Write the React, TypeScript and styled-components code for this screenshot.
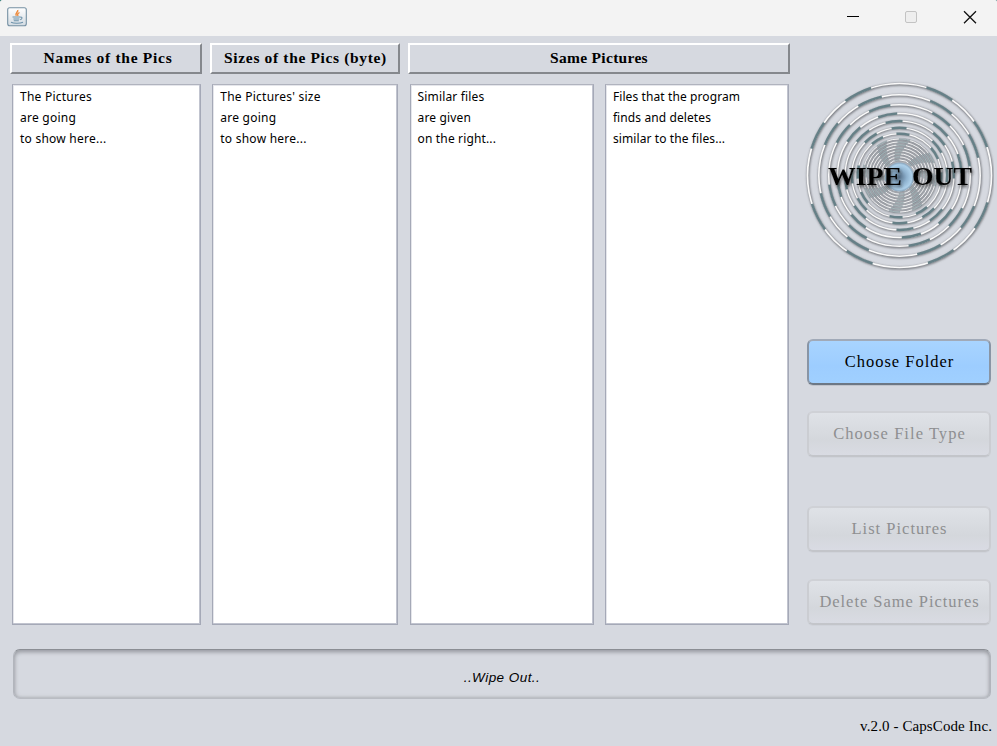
import React from "react";
import styled, { createGlobalStyle } from "styled-components";

const GlobalStyle = createGlobalStyle`
  * { box-sizing: border-box; }
  body { margin: 0; background: #27776f; overflow: hidden; }
`;

const Window = styled.div`
  width: 997px;
  height: 746px;
  display: flex;
  flex-direction: column;
  background: #d6d9e0;
  border-radius: 3px 2px 0 0;
  overflow: hidden;
  color: #000;
`;

const TitleBar = styled.header`
  height: 36px;
  flex: none;
  display: flex;
  align-items: flex-start;
  justify-content: space-between;
  background: #f3f3f3;
  padding: 7px 18px 0 7px;
`;

const WindowControls = styled.div`
  display: flex;
  align-items: center;
  gap: 40px;
  padding-top: 1px;
`;

const Main = styled.main`
  display: flex;
  height: 589px;
  padding: 7px 6px 0 10px;
`;

const Tables = styled.section`
  width: 780px;
  flex: none;
`;

const HeadingRow = styled.div`
  display: grid;
  grid-template-columns: 192px 190px 382px;
  gap: 8px;
  height: 31px;
`;

const Heading = styled.h2<{ $spacing: string; $shift?: string }>`
  margin: 0;
  height: 31px;
  display: flex;
  align-items: center;
  justify-content: center;
  padding: 0 0 1px ${(p) => p.$shift ?? "0"};
  border: 2px solid;
  border-color: #fff #85888d #85888d #fff;
  font: bold 15.5px/20px "Liberation Serif", serif;
  letter-spacing: ${(p) => p.$spacing};
  white-space: nowrap;
`;

const ListRow = styled.div`
  display: grid;
  grid-template-columns: 189px 186px 184px 184px;
  column-gap: 11.3px;
  justify-content: start;
  height: 541px;
  margin: 10px 0 0 2px;
`;

const List = styled.ul`
  list-style: none;
  margin: 0;
  padding: 2px 0 0 7px;
  background: #fff;
  border: 1px solid #a5a9b7;
  border-top-color: #b0b3be;
  box-shadow: inset -1px -1px #c1c4cf, inset 1px 1px #e5e6eb;
`;

const ListItem = styled.li<{ $spacing: string }>`
  height: 21px;
  font: 12px/20px "Noto Sans", sans-serif;
  letter-spacing: ${(p) => p.$spacing};
  white-space: nowrap;
`;

const Sidebar = styled.aside`
  width: 187px;
  margin-left: 15px;
  display: flex;
  flex-direction: column;
  align-items: center;
`;

const LogoArt = styled.svg`
  display: block;
  width: 190px;
  height: 190px;
  margin: 38px 0 68px;
  flex: none;
`;

const ActionButton = styled.button<{ $gap: string; $spacing: string }>`
  width: 184px;
  height: 46px;
  flex: none;
  margin: 0 0 ${(p) => p.$gap};
  padding: 0 0 1px 2px;
  font: 16.5px/22px "Liberation Serif", serif;
  letter-spacing: ${(p) => p.$spacing};
  white-space: nowrap;
  color: #000;
  border: 2px solid;
  border-color: #a1aab8 #8995a5 #6d7885;
  border-radius: 6px;
  background: linear-gradient(#a8d4ff, #9dcdff 60%, #a0d0ff);
  box-shadow: 0 1px #c1c4cb;
  &:disabled {
    color: #8e8f91;
    border-color: #cfd1d6 #cbcdd2 #c3c5ca;
    background: linear-gradient(#dfe2e7, #d4d7dc 65%, #d9dbe3);
    box-shadow: 0 1px #d0d3da;
  }
`;

const StatusBar = styled.div`
  flex: none;
  margin: 24px 6px 0 13px;
  height: 50px;
  display: flex;
  align-items: center;
  justify-content: center;
  padding: 7px 0 0;
  border: 1px solid;
  border-color: #8b8e94 #b2b5bc #b9bcc3;
  border-radius: 7px;
  box-shadow: inset 0 2px 4px #9699a0, inset 0 -1px 2px #bfc2c8, inset 0 0 5px #c0c2c6;
  font: italic 13.5px/16px "Liberation Sans", sans-serif;
  letter-spacing: 0.45px;
`;

const Footer = styled.footer`
  display: flex;
  justify-content: flex-end;
  padding: 17px 5px 0 0;
  font: 15px/20px "Liberation Serif", serif;
  letter-spacing: 0.1px;
`;

const CENTER_X = 95.5;
const CENTER_Y = 94.5;

const point = (r: number, degrees: number) => {
  const a = (degrees * Math.PI) / 180;
  return `${(CENTER_X + r * Math.sin(a)).toFixed(2)} ${(CENTER_Y - r * Math.cos(a)).toFixed(2)}`;
};

const rings = Array.from({ length: 15 }, (_, i) => ({
  radius: i < 7 ? 92 * Math.pow(0.877, i) : 36.6 - (i - 7) * 3,
  turn: i < 7 ? i * 5.3 : 35 - (i - 7) * 2.5,
  stroke: i < 7 ? 2 - i * 0.1 : 1.1,
  tealStroke: i < 7 ? 2.5 : 1.5,
  tealOpacity: i < 7 ? 1 : 0.55,
}));

// Each quadrant carries two teal dashes, 18 degrees long.
const dashes = (radius: number, turn: number) =>
  [0, 90, 180, 270]
    .flatMap((q) => [q + 17, q + 54])
    .map((start) => `M${point(radius, start + turn)}A${radius} ${radius} 0 0 1 ${point(radius, start + turn + 18)}`)
    .join("");

const Logo = () => (
  <LogoArt viewBox="0 0 190 190" role="img" aria-label="Wipe Out">
    <defs>
      <filter id="soften"><feGaussianBlur stdDeviation="0.8" /></filter>
      <filter id="glow" x="-5%" y="-30%" width="110%" height="180%">
        <feDropShadow dx="1" dy="2" stdDeviation="1.5" floodColor="#222" floodOpacity="0.7" />
      </filter>
      <radialGradient id="orb">
        <stop offset="0" stopColor="#57718a" />
        <stop offset="0.5" stopColor="#8fb2cf" />
        <stop offset="0.85" stopColor="#add0ea" />
        <stop offset="1" stopColor="#86a1b8" />
      </radialGradient>
    </defs>
    <circle cx={CENTER_X} cy={CENTER_Y} r="38" fill="#9fa7b0" opacity="0.25" />
    <g fill="none" filter="url(#soften)" stroke="#5f6266">
      {rings.map((r) => (
        <circle key={r.radius} cx={CENTER_X + 0.5} cy={CENTER_Y + 0.8} r={r.radius} strokeWidth={r.stroke * 1.3} opacity="0.85" />
      ))}
    </g>
    {rings.map((r) => (
      <g key={r.radius} fill="none">
        <circle cx={CENTER_X} cy={CENTER_Y} r={r.radius} stroke="#fafafa" strokeWidth={r.stroke * 0.85} />
        <path d={dashes(r.radius, r.turn)} stroke="#668087" strokeWidth={r.tealStroke} opacity={r.tealOpacity} />
      </g>
    ))}
    <circle cx="95.5" cy="96" r="14.5" fill="url(#orb)" />
    <text
      x="24" y="104" textLength="144" lengthAdjust="spacingAndGlyphs" wordSpacing="3"
      fontFamily="Liberation Serif, serif" fontSize="26" fontWeight="bold" fill="#050505" filter="url(#glow)"
    >
      WIPE OUT
    </text>
  </LogoArt>
);

const JavaIcon = () => (
  <svg width="20" height="20" viewBox="0 0 20 20" fill="none">
    <defs>
      <linearGradient id="tile" x2="0" y2="1">
        <stop stopColor="#fff" />
        <stop offset="1" stopColor="#d3dbe2" />
      </linearGradient>
    </defs>
    <rect x=".7" y=".7" width="18.6" height="18" rx="2" fill="url(#tile)" stroke="#7590a3" strokeWidth="1.1" />
    <path d="M10.7 3c1 2-3.2 2.9-1.4 5.8M12.5 5.5c-2.4 1.3-2.2 2.1-1.4 3.5" stroke="#ed8a3c" strokeWidth="1.4" />
    <path d="M5.5 10h7.5M6.4 12h6M6.8 13.7h5M4 15.3c3 1.3 9 1.2 12-.1M13 10.2c2.6-.7 2.7 1.7.2 2.5" stroke="#6d92aa" strokeWidth="1.1" />
  </svg>
);

const lists = [
  { spacing: "0.24px", items: ["The Pictures", "are going", "to show here..."] },
  { spacing: "0.24px", items: ["The Pictures' size", "are going", "to show here..."] },
  { spacing: "0.15px", items: ["Similar files", "are given", "on the right..."] },
  { spacing: "0.1px", items: ["Files that the program", "finds and deletes", "similar to the files..."] },
];

export default function App() {
  return (
    <Window>
      <GlobalStyle />
      <TitleBar>
        <JavaIcon />
        <WindowControls>
          <svg width="20" height="20"><path d="M4 8.5h12" stroke="#000" /></svg>
          <svg width="18" height="20"><rect x="2.5" y="3.5" width="11" height="11" rx="1.5" fill="#eee" stroke="#c3c3c3" /></svg>
          <svg width="18" height="20"><path d="M3 3.2l12 12M15 3.2l-12 12" stroke="#111" strokeWidth="1.3" /></svg>
        </WindowControls>
      </TitleBar>
      <Main>
        <Tables>
          <HeadingRow>
            <Heading $spacing="0.72px" $shift="4px">Names of the Pics</Heading>
            <Heading $spacing="0.65px" $shift="1px">Sizes of the Pics (byte)</Heading>
            <Heading $spacing="0.3px">Same Pictures</Heading>
          </HeadingRow>
          <ListRow>
            {lists.map((list) => (
              <List key={list.items[0]}>
                {list.items.map((item) => <ListItem key={item} $spacing={list.spacing}>{item}</ListItem>)}
              </List>
            ))}
          </ListRow>
        </Tables>
        <Sidebar>
          <Logo />
          <ActionButton $gap="26px" $spacing="1px">Choose Folder</ActionButton>
          <ActionButton $gap="49px" $spacing="1.05px" disabled>Choose File Type</ActionButton>
          <ActionButton $gap="27px" $spacing="1px" disabled>List Pictures</ActionButton>
          <ActionButton $gap="0" $spacing="0.95px" disabled>Delete Same Pictures</ActionButton>
        </Sidebar>
      </Main>
      <StatusBar>..Wipe Out..</StatusBar>
      <Footer>v.2.0 - CapsCode Inc.</Footer>
    </Window>
  );
}
